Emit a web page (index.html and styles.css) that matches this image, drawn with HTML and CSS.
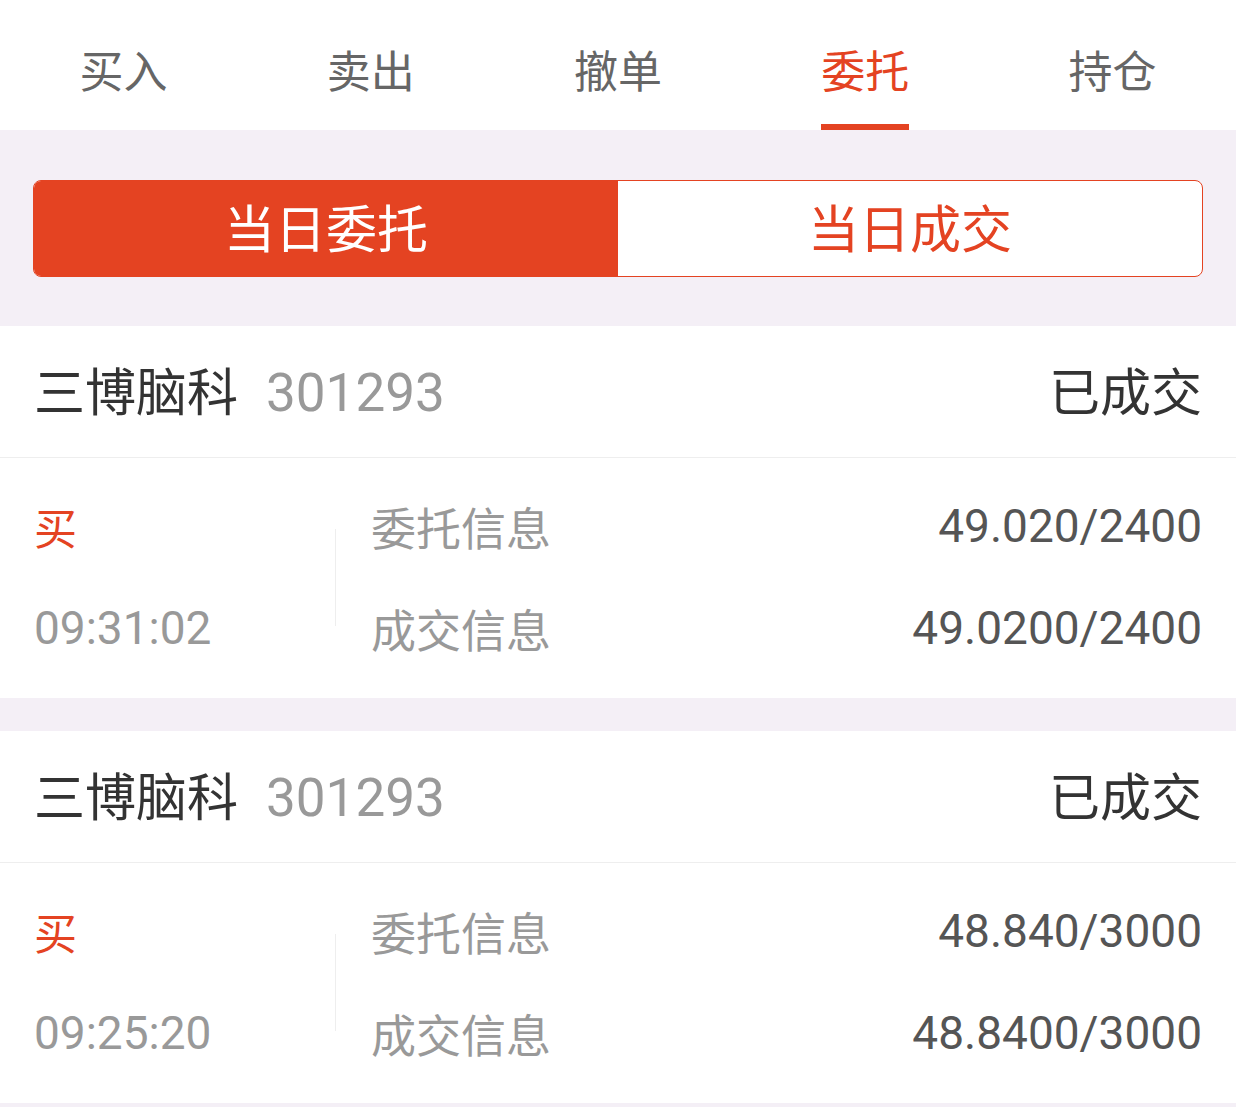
FILE: index.html
```html
<!DOCTYPE html>
<html lang="zh-CN">
<head>
<meta charset="utf-8">
<link rel="stylesheet" href="styles.css">
</head>
<body>
<nav class="tabs">
  <div class="tab"><span class="tab-label">买入</span></div>
  <div class="tab"><span class="tab-label">卖出</span></div>
  <div class="tab"><span class="tab-label">撤单</span></div>
  <div class="tab active"><span class="tab-label">委托</span></div>
  <div class="tab"><span class="tab-label">持仓</span></div>
</nav>
<section class="seg-wrap">
  <div class="seg">
    <div class="seg-item on">当日委托</div>
    <div class="seg-item">当日成交</div>
  </div>
</section>
<section class="card">
  <div class="card-head">
    <div class="stock"><span class="name">三博脑科</span><span class="code">301293</span></div>
    <div class="status">已成交</div>
  </div>
  <div class="detail">
    <div class="side">买</div>
    <div class="divider"></div>
    <div class="label r1">委托信息</div>
    <div class="value r1">49.020/2400</div>
    <div class="time">09:31:02</div>
    <div class="label r2">成交信息</div>
    <div class="value r2">49.0200/2400</div>
  </div>
</section>
<section class="card">
  <div class="card-head">
    <div class="stock"><span class="name">三博脑科</span><span class="code">301293</span></div>
    <div class="status">已成交</div>
  </div>
  <div class="detail">
    <div class="side">买</div>
    <div class="divider"></div>
    <div class="label r1">委托信息</div>
    <div class="value r1">48.840/3000</div>
    <div class="time">09:25:20</div>
    <div class="label r2">成交信息</div>
    <div class="value r2">48.8400/3000</div>
  </div>
</section>
</body>
</html>
```
FILE: styles.css
```css
* { box-sizing: border-box; }
html, body {
  margin: 0;
  padding: 0;
  background: #f4eff6;
  font-family: "Noto Sans CJK SC", "Noto Sans", sans-serif;
}
.tabs {
  display: grid;
  grid-template-columns: repeat(5, 1fr);
  height: 130px;
  background: #fff;
}
.tab {
  display: flex;
  justify-content: center;
  align-items: flex-end;
}
.tab-label {
  font-size: 44px;
  line-height: 52px;
  padding-bottom: 29px;
  border-bottom: 6px solid transparent;
  color: #666;
}
.tab.active .tab-label {
  color: #e44322;
  border-bottom-color: #e44322;
}
.seg-wrap {
  padding: 50px 33px 49px;
}
.seg {
  display: grid;
  grid-template-columns: 1fr 1fr;
  height: 97px;
  border: 1px solid #e44322;
  border-radius: 8px;
  overflow: hidden;
  background: #fff;
}
.seg-item {
  display: flex;
  align-items: center;
  justify-content: center;
  padding-bottom: 6px;
  font-size: 51px;
  color: #e44322;
}
.seg-item.on {
  background: #e44322;
  color: #fff;
}
.card {
  background: #fff;
  margin-bottom: 33px;
}
.card-head {
  height: 132px;
  padding: 0 34px 5px;
  display: flex;
  align-items: center;
  justify-content: space-between;
  border-bottom: 1px solid #eeeeee;
}
.name {
  font-size: 51px;
  color: #333;
}
.code {
  font-family: "Roboto", "Noto Sans", sans-serif;
  font-size: 53px;
  color: #999;
  margin-left: 28px;
}
.status {
  font-size: 51px;
  color: #333;
}
.detail {
  display: grid;
  grid-template-columns: 301px 1px 1fr auto;
  grid-template-rows: 60px 60px;
  row-gap: 42px;
  padding: 38px 34px 40px;
  align-items: center;
}
.side {
  grid-column: 1;
  grid-row: 1;
  font-size: 43px;
  color: #e44322;
}
.time {
  grid-column: 1;
  grid-row: 2;
  font-family: "Roboto", "Noto Sans", sans-serif;
  font-size: 46px;
  color: #999;
}
.divider {
  grid-column: 2;
  grid-row: 1 / 3;
  align-self: center;
  height: 97px;
  background: #eeeeee;
}
.label {
  grid-column: 3;
  padding-left: 35px;
  font-size: 45px;
  color: #999;
}
.value {
  grid-column: 4;
  text-align: right;
  font-family: "Roboto", "Noto Sans", sans-serif;
  font-size: 46px;
  color: #555;
}
.r1 { grid-row: 1; }
.r2 { grid-row: 2; }
```
